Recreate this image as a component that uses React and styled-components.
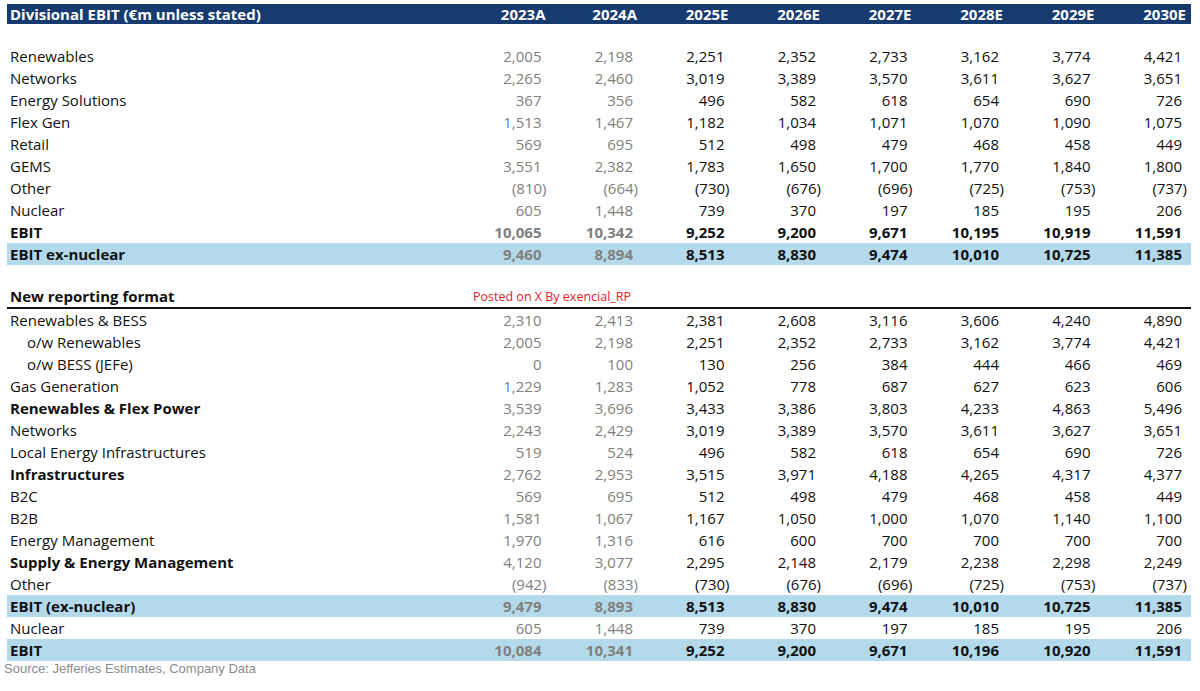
import React from "react";
import styled, { createGlobalStyle } from "styled-components";

const GlobalStyle = createGlobalStyle`
    html, body {
        margin: 0;
        padding: 0;
        background: #ffffff;
    }
    body {
        font-family: "Open Sans", "Noto Sans", sans-serif;
    }
`;

const Wrapper = styled.div`
    width: 1184px;
    padding: 4px 9px 0 7px;
    color: #111111;
`;
const HeaderBar = styled.div`
    display: grid;
    grid-template-columns: 452px repeat(8, 91.5px);
    height: 20px;
    background: #173b6e;
    color: #ffffff;
    font-size: 15px;
    font-weight: 700;
    line-height: 20px;
`;
const HeaderTitle = styled.div`
    padding-left: 3px;
    white-space: nowrap;
`;
const HeaderYear = styled.div`
    text-align: right;
    padding-right: 5px;
`;
const Spacer = styled.div`
    height: ${(p) => p.h}px;
`;
const Row = styled.div`
    display: grid;
    grid-template-columns: 452px repeat(8, 91.5px);
    height: 22px;
    line-height: 22px;
    font-size: 15px;
    background: ${(p) => (p.band ? "#b4d9eb" : "transparent")};
`;
const Label = styled.div`
    padding-left: ${(p) => (p.indent ? 20 : 3)}px;
    font-weight: ${(p) => (p.bold ? 700 : 400)};
    white-space: nowrap;
`;
const Num = styled.div`
    text-align: right;
    padding-right: ${(p) => (p.neg ? 4 : 9)}px;
    color: ${(p) => (p.actual ? "#808080" : "#111111")};
    font-weight: ${(p) => (p.bold ? 700 : 400)};
`;
const SectionRow = styled.div`
    display: grid;
    grid-template-columns: 466px 1fr;
    height: 21px;
    line-height: 21px;
    border-bottom: 2px solid #111111;
`;
const SectionTitle = styled.div`
    padding-left: 3px;
    font-size: 15px;
    font-weight: 700;
`;
const PostedNote = styled.div`
    color: #e3202c;
    font-size: 12.5px;
    line-height: 22px;
`;
const Source = styled.div`
    font-family: "Liberation Sans", Arial, sans-serif;
    font-size: 13px;
    color: #8a8a8a;
    line-height: 16px;
    margin-left: -3px;
`;

const years = ["2023A", "2024A", "2025E", "2026E", "2027E", "2028E", "2029E", "2030E"];

const top = [
    { label: "Renewables", v: ["2,005", "2,198", "2,251", "2,352", "2,733", "3,162", "3,774", "4,421"] },
    { label: "Networks", v: ["2,265", "2,460", "3,019", "3,389", "3,570", "3,611", "3,627", "3,651"] },
    { label: "Energy Solutions", v: ["367", "356", "496", "582", "618", "654", "690", "726"] },
    { label: "Flex Gen", v: ["1,513", "1,467", "1,182", "1,034", "1,071", "1,070", "1,090", "1,075"] },
    { label: "Retail", v: ["569", "695", "512", "498", "479", "468", "458", "449"] },
    { label: "GEMS", v: ["3,551", "2,382", "1,783", "1,650", "1,700", "1,770", "1,840", "1,800"] },
    { label: "Other", v: ["(810)", "(664)", "(730)", "(676)", "(696)", "(725)", "(753)", "(737)"] },
    { label: "Nuclear", v: ["605", "1,448", "739", "370", "197", "185", "195", "206"] },
    { label: "EBIT", bold: true, boldNums: true, v: ["10,065", "10,342", "9,252", "9,200", "9,671", "10,195", "10,919", "11,591"] },
    { label: "EBIT ex-nuclear", bold: true, boldNums: true, band: true, v: ["9,460", "8,894", "8,513", "8,830", "9,474", "10,010", "10,725", "11,385"] },
];

const bottom = [
    { label: "Renewables & BESS", v: ["2,310", "2,413", "2,381", "2,608", "3,116", "3,606", "4,240", "4,890"] },
    { label: "o/w Renewables", indent: true, v: ["2,005", "2,198", "2,251", "2,352", "2,733", "3,162", "3,774", "4,421"] },
    { label: "o/w BESS (JEFe)", indent: true, v: ["0", "100", "130", "256", "384", "444", "466", "469"] },
    { label: "Gas Generation", v: ["1,229", "1,283", "1,052", "778", "687", "627", "623", "606"] },
    { label: "Renewables & Flex Power", bold: true, v: ["3,539", "3,696", "3,433", "3,386", "3,803", "4,233", "4,863", "5,496"] },
    { label: "Networks", v: ["2,243", "2,429", "3,019", "3,389", "3,570", "3,611", "3,627", "3,651"] },
    { label: "Local Energy Infrastructures", v: ["519", "524", "496", "582", "618", "654", "690", "726"] },
    { label: "Infrastructures", bold: true, v: ["2,762", "2,953", "3,515", "3,971", "4,188", "4,265", "4,317", "4,377"] },
    { label: "B2C", v: ["569", "695", "512", "498", "479", "468", "458", "449"] },
    { label: "B2B", v: ["1,581", "1,067", "1,167", "1,050", "1,000", "1,070", "1,140", "1,100"] },
    { label: "Energy Management", v: ["1,970", "1,316", "616", "600", "700", "700", "700", "700"] },
    { label: "Supply & Energy Management", bold: true, v: ["4,120", "3,077", "2,295", "2,148", "2,179", "2,238", "2,298", "2,249"] },
    { label: "Other", v: ["(942)", "(833)", "(730)", "(676)", "(696)", "(725)", "(753)", "(737)"] },
    { label: "EBIT (ex-nuclear)", bold: true, boldNums: true, band: true, v: ["9,479", "8,893", "8,513", "8,830", "9,474", "10,010", "10,725", "11,385"] },
    { label: "Nuclear", v: ["605", "1,448", "739", "370", "197", "185", "195", "206"] },
    { label: "EBIT", bold: true, boldNums: true, band: true, v: ["10,084", "10,341", "9,252", "9,200", "9,671", "10,196", "10,920", "11,591"] },
];

const DataRow = ({ row }) => (
    <Row band={row.band}>
        <Label bold={row.bold} indent={row.indent}>{row.label}</Label>
        {row.v.map((val, i) => (
            <Num key={i} actual={i < 2} bold={row.boldNums} neg={val.startsWith("(")}>
                {val}
            </Num>
        ))}
    </Row>
);

const App = () => {
    return (
        <React.Fragment>
            <GlobalStyle />
            <Wrapper>
                <HeaderBar>
                    <HeaderTitle>Divisional EBIT (€m unless stated)</HeaderTitle>
                    {years.map((y) => (
                        <HeaderYear key={y}>{y}</HeaderYear>
                    ))}
                </HeaderBar>
                <Spacer h={21} />
                {top.map((row, i) => (
                    <DataRow key={i} row={row} />
                ))}
                <Spacer h={21} />
                <SectionRow>
                    <SectionTitle>New reporting format</SectionTitle>
                    <PostedNote>Posted on X By exencial_RP</PostedNote>
                </SectionRow>
                {bottom.map((row, i) => (
                    <DataRow key={i} row={row} />
                ))}
                <Source>Source: Jefferies Estimates, Company Data</Source>
            </Wrapper>
        </React.Fragment>
    );
};

export default App;
